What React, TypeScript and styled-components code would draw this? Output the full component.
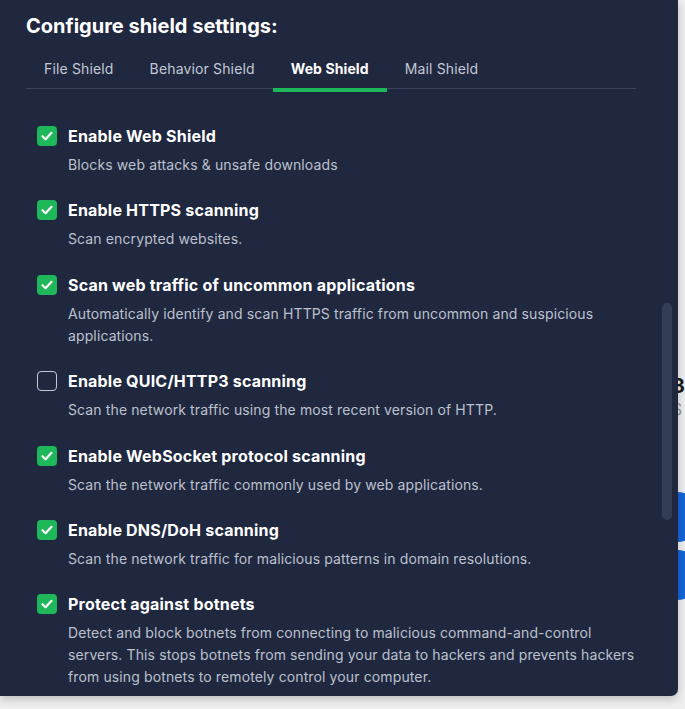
import React from "react";
import styled, { createGlobalStyle } from "styled-components";

const GlobalStyle = createGlobalStyle`
  html, body { margin: 0; padding: 0; }
  body {
    background: #eeeeee;
    font-family: Inter, "Noto Sans", "Liberation Sans", sans-serif;
    -webkit-font-smoothing: antialiased;
  }
`;

const Stage = styled.div`
  position: relative;
  width: 685px;
  height: 709px;
  overflow: hidden;
  background: #efefef;
`;

const BackPage = styled.div`
  display: flex;
  flex-direction: column;
  align-items: flex-start;
  padding: 374px 0 0 672px;
`;

const BackNumber = styled.div`
  font-size: 20px;
  font-weight: 700;
  color: #1b1b1b;
  line-height: 24px;
`;

const BackSub = styled.div`
  font-size: 16px;
  color: #9a9a9a;
  line-height: 22px;
`;

const BackButton = styled.div<{ $mt: number }>`
  margin-top: ${(p) => p.$mt}px;
  margin-left: -20px;
  width: 50px;
  height: 50px;
  border-radius: 50%;
  background: #1565d8;
`;

const Dialog = styled.div`
  position: absolute;
  left: 0;
  top: 0;
  width: 678px;
  height: 696px;
  background: #202840;
  border-radius: 0 0 7px 0;
  box-shadow: 0 3px 10px rgba(0, 0, 0, 0.22);
  display: flex;
  flex-direction: column;
  overflow: hidden;
`;

const Header = styled.div`
  padding: 12px 42px 0 26px;
`;

const Title = styled.h2`
  margin: 0;
  font-size: 20px;
  line-height: 28px;
  font-weight: 700;
  color: #ffffff;
`;

const TabBar = styled.div`
  display: flex;
  margin-top: 8px;
  border-bottom: 1px solid #3b445e;
`;

const Tab = styled.div<{ $active?: boolean }>`
  position: relative;
  padding: 0 18px;
  height: 40px;
  display: flex;
  align-items: center;
  font-size: 14px;
  letter-spacing: ${(p) => (p.$active ? "0.1px" : "0.15px")};
  font-weight: ${(p) => (p.$active ? 700 : 400)};
  color: ${(p) => (p.$active ? "#ffffff" : "#c3c8d3")};
  &::after {
    content: "";
    display: ${(p) => (p.$active ? "block" : "none")};
    position: absolute;
    left: 0;
    right: 0;
    bottom: -4px;
    height: 4px;
    background: #1eb75a;
  }
`;

const ScrollArea = styled.div`
  position: relative;
  flex: 1;
  padding: 36px 40px 0 37px;
  overflow: hidden;
`;

const Scrollbar = styled.div`
  position: absolute;
  left: 662px;
  top: 303px;
  width: 10px;
  height: 217px;
  border-radius: 5px;
  background: #343d56;
`;

const List = styled.div`
  display: flex;
  flex-direction: column;
  gap: 23.4px;
`;

const Item = styled.div`
  display: grid;
  grid-template-columns: 20px 1fr;
  column-gap: 11px;
  row-gap: 7px;
`;

const Box = styled.div<{ $checked: boolean }>`
  width: 20px;
  height: 20px;
  margin-top: 1px;
  box-sizing: border-box;
  border-radius: 4px;
  display: flex;
  align-items: center;
  justify-content: center;
  background: ${(p) => (p.$checked ? "#1eb75a" : "transparent")};
  border: ${(p) => (p.$checked ? "none" : "1.5px solid #c5cad4")};
`;

const ItemTitle = styled.div`
  font-size: 16px;
  line-height: 22px;
  font-weight: 700;
  letter-spacing: 0.2px;
  color: #ffffff;
`;

const ItemDesc = styled.div`
  grid-column: 2;
  font-size: 14px;
  line-height: 22px;
  letter-spacing: 0.12px;
  color: #bcc1cd;
`;

const Check = () => (
  <svg width="12" height="10" viewBox="0 0 12 10" fill="none">
    <path
      d="M1.5 5.2 L4.6 8.2 L10.5 1.8"
      stroke="#ffffff"
      strokeWidth="2.2"
      strokeLinecap="round"
      strokeLinejoin="round"
    />
  </svg>
);

const items = [
  { checked: true, title: "Enable Web Shield", desc: "Blocks web attacks & unsafe downloads" },
  { checked: true, title: "Enable HTTPS scanning", desc: "Scan encrypted websites." },
  {
    checked: true,
    title: "Scan web traffic of uncommon applications",
    desc: "Automatically identify and scan HTTPS traffic from uncommon and suspicious applications.",
  },
  {
    checked: false,
    title: "Enable QUIC/HTTP3 scanning",
    desc: "Scan the network traffic using the most recent version of HTTP.",
  },
  {
    checked: true,
    title: "Enable WebSocket protocol scanning",
    desc: "Scan the network traffic commonly used by web applications.",
  },
  {
    checked: true,
    title: "Enable DNS/DoH scanning",
    desc: "Scan the network traffic for malicious patterns in domain resolutions.",
  },
  {
    checked: true,
    title: "Protect against botnets",
    desc: "Detect and block botnets from connecting to malicious command-and-control servers. This stops botnets from sending your data to hackers and prevents hackers from using botnets to remotely control your computer.",
  },
];

export default function App() {
  return (
    <>
      <GlobalStyle />
      <Stage>
        <BackPage>
          <BackNumber>3</BackNumber>
          <BackSub>S</BackSub>
          <BackButton $mt={72} />
          <BackButton $mt={8} />
        </BackPage>
        <Dialog>
          <Header>
            <Title>Configure shield settings:</Title>
            <TabBar>
              <Tab>File Shield</Tab>
              <Tab>Behavior Shield</Tab>
              <Tab $active>Web Shield</Tab>
              <Tab>Mail Shield</Tab>
            </TabBar>
          </Header>
          <ScrollArea>
            <List>
              {items.map((it) => (
                <Item key={it.title}>
                  <Box $checked={it.checked}>{it.checked && <Check />}</Box>
                  <ItemTitle>{it.title}</ItemTitle>
                  <ItemDesc>{it.desc}</ItemDesc>
                </Item>
              ))}
            </List>
          </ScrollArea>
          <Scrollbar />
        </Dialog>
      </Stage>
    </>
  );
}
